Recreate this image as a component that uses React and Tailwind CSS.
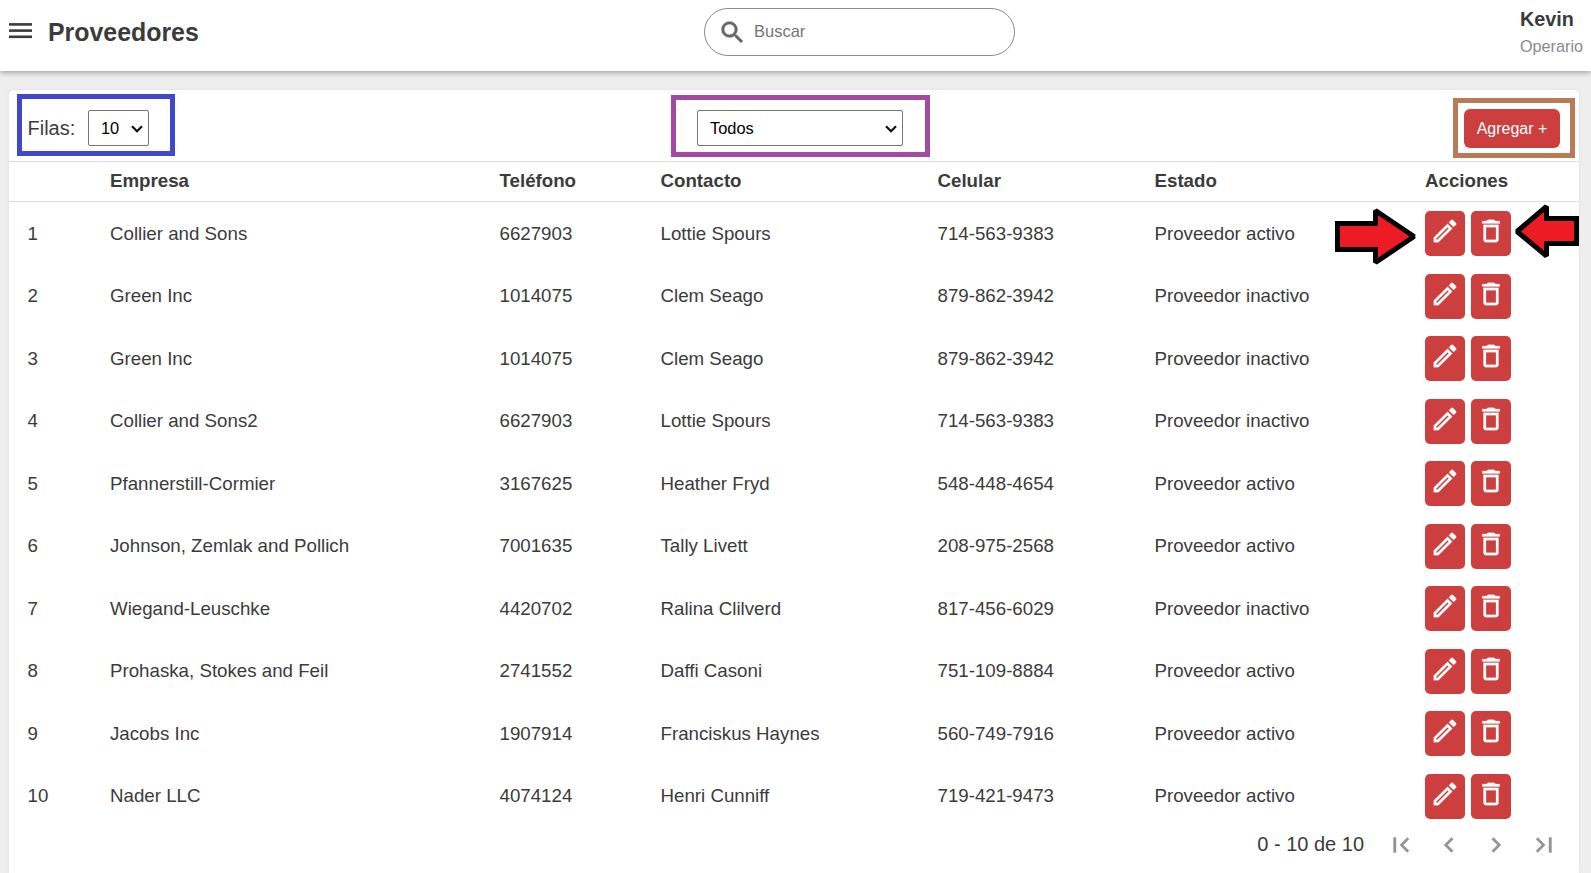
const rows = [
  ["Collier and Sons", "6627903", "Lottie Spours", "714-563-9383", "Proveedor activo"],
  ["Green Inc", "1014075", "Clem Seago", "879-862-3942", "Proveedor inactivo"],
  ["Green Inc", "1014075", "Clem Seago", "879-862-3942", "Proveedor inactivo"],
  ["Collier and Sons2", "6627903", "Lottie Spours", "714-563-9383", "Proveedor inactivo"],
  ["Pfannerstill-Cormier", "3167625", "Heather Fryd", "548-448-4654", "Proveedor activo"],
  ["Johnson, Zemlak and Pollich", "7001635", "Tally Livett", "208-975-2568", "Proveedor activo"],
  ["Wiegand-Leuschke", "4420702", "Ralina Clilverd", "817-456-6029", "Proveedor inactivo"],
  ["Prohaska, Stokes and Feil", "2741552", "Daffi Casoni", "751-109-8884", "Proveedor activo"],
  ["Jacobs Inc", "1907914", "Franciskus Haynes", "560-749-7916", "Proveedor activo"],
  ["Nader LLC", "4074124", "Henri Cunniff", "719-421-9473", "Proveedor activo"],
];

const ICONS = {
  search: "M15.5 14h-.79l-.28-.27A6.471 6.471 0 0 0 16 9.5 6.5 6.5 0 1 0 9.5 16c1.61 0 3.09-.59 4.23-1.57l.27.28v.79l5 4.99L20.49 19l-4.99-5zm-6 0C7.01 14 5 11.99 5 9.5S7.01 5 9.5 5 14 7.01 14 9.5 11.99 14 9.5 14z",
  edit: "M14.06 9.02l.92.92L5.92 19H5v-.92l9.06-9.06M17.66 3c-.25 0-.51.1-.7.29l-1.83 1.83 3.75 3.75 1.83-1.83a.996.996 0 0 0 0-1.41l-2.34-2.34c-.2-.2-.45-.29-.71-.29zm-3.6 3.19L3 17.25V21h3.75L17.81 9.94l-3.75-3.75z",
  trash: "M6 19c0 1.1.9 2 2 2h8c1.1 0 2-.9 2-2V7H6v12zM8 9h8v10H8V9zm7.5-5l-1-1h-5l-1 1H5v2h14V4h-3.5z",
  first: "M18.41 16.59L13.82 12l4.59-4.59L17 6l-6 6 6 6zM6 6h2v12H6z",
  prev: "M15.41 7.41L14 6l-6 6 6 6 1.41-1.41L10.83 12z",
  next: "M10 6L8.59 7.41 13.17 12l-4.58 4.59L10 18l6-6z",
  last: "M5.59 7.41L10.18 12l-4.59 4.59L7 18l6-6-6-6zM16 6h2v12h-2z",
};

const GRID = "grid grid-cols-[82.5px_389.5px_161px_277px_217px_270.5px_1fr] pl-[18.5px]";

function Icon({ name, className = "size-[30px]", weight = 0.3 }) {
  return (
    <svg className={`shrink-0 ${className}`} viewBox="0 0 24 24" fill="currentColor" stroke="currentColor" strokeWidth={weight}>
      <path d={ICONS[name]} />
    </svg>
  );
}

function Select({ label, className }) {
  return (
    <div className={`relative h-9 ${className}`}>
      <select className="h-full w-full appearance-none rounded-[2px] border border-[#767676] bg-white pl-3 text-[16.4px] leading-none text-black">
        <option>{label}</option>
      </select>
      <svg className="pointer-events-none absolute top-[15px] right-[6px] h-2 w-3" viewBox="0 0 12 8" fill="none" stroke="#101010" strokeWidth="2.2">
        <path d="M1 1.2 6 6.2 11 1.2" />
      </svg>
    </div>
  );
}

function ActionButton({ icon }) {
  return (
    <button className="flex h-[45px] w-10 justify-center rounded-[5px] bg-[#cd3f3f] pt-[5px] text-white">
      <Icon name={icon} weight={0.2} />
    </button>
  );
}

export default function App() {
  return (
    <div className="flex h-[873px] w-[1591px] flex-col overflow-hidden bg-[#eeeeee] font-['Liberation_Sans',Arial,sans-serif] text-[18.72px] text-[#3b3b3b]">
      <header className="relative flex h-[71px] shrink-0 items-start justify-between bg-white shadow-[0_2px_5px_rgba(0,0,0,0.3)]">
        <div className="flex h-[65px] w-[704px] items-center">
          <svg className="mb-[3px] ml-[8.5px] h-4 w-[23px] shrink-0" viewBox="0 0 23 16" fill="#3b3b3b">
            <rect y="0.1" width="23" height="2.6" />
            <rect y="6.3" width="23" height="2.6" />
            <rect y="12.5" width="23" height="2.6" />
          </svg>
          <h1 className="ml-[16.5px] text-[24.9px] font-bold">Proveedores</h1>
        </div>
        <div className="mt-2 flex h-12 w-[311px] items-center rounded-full border border-[#8a8a8a] pl-[13px]">
          <Icon name="search" className="size-[29px] text-[#666]" weight={0.5} />
          <input className="ml-[7px] w-48 bg-transparent pb-px text-[16.5px] outline-none placeholder:text-[#757575]" placeholder="Buscar" />
        </div>
        <div className="flex w-[576px] flex-col items-end pt-[8px] pr-2">
          <div className="flex flex-col">
            <span className="text-[19.8px] leading-[22px] font-bold">Kevin</span>
            <span className="mt-[7px] text-[16.2px] leading-[18px] text-[#8a8a8a]">Operario</span>
          </div>
        </div>
      </header>

      <main className="mt-[19px] ml-[9px] flex w-[1570px] flex-1 flex-col rounded-t-[5px] bg-white shadow-[0_0_4px_rgba(0,0,0,0.06)]">
        <div className="flex h-[72px] shrink-0 items-start border-b border-[#dcdcdc]">
          <div className="mt-1 ml-2 flex h-[62px] w-[158px] items-center border-5 border-[#3f48cc] pt-[6px] pl-[5.5px]">
            <span className="w-[60.5px] text-[20px]">Filas:</span>
            <Select label="10" className="w-[61px]" />
          </div>
          <div className="mt-[5px] mr-auto ml-[496px] flex h-[62px] w-[259px] items-center border-5 border-[#a349a4] pt-[4px] pl-[21px]">
            <Select label="Todos" className="w-[206px]" />
          </div>
          <div className="mt-2 mr-1 flex h-[60px] w-[122px] items-center border-5 border-[#b97a57] pl-[6px]">
            <button className="h-[39px] w-24 rounded-[6px] bg-[#cd3f3f] pt-px text-base text-white">Agregar +</button>
          </div>
        </div>

        <div className={`${GRID} h-10 shrink-0 items-center border-b border-[#dcdcdc] pb-[1.5px] font-bold`}>
          <span />
          <span>Empresa</span>
          <span>Teléfono</span>
          <span>Contacto</span>
          <span>Celular</span>
          <span>Estado</span>
          <span>Acciones</span>
        </div>

        <div className="flex flex-col pt-[0.5px]">
          {rows.map((row, i) => (
            <div key={i} className={`${GRID} h-[62.5px] items-center`}>
              <span>{i + 1}</span>
              {row.map((cell, j) => (
                <span key={j}>{cell}</span>
              ))}
              <div className="flex gap-[6px]">
                <ActionButton icon="edit" />
                <ActionButton icon="trash" />
              </div>
            </div>
          ))}
        </div>

        <div className="flex h-[35px] items-center justify-end pr-[20.5px]">
          <span className="mr-[22px] pb-[2px] text-[20px]">0 - 10 de 10</span>
          <div className="flex gap-[17.5px] text-[#949494]">
            <Icon name="first" />
            <Icon name="prev" />
            <Icon name="next" />
            <Icon name="last" />
          </div>
        </div>
      </main>

      <svg className="absolute top-[200px] left-[1330px] h-[70px] w-[249px]" viewBox="1330 200 249 70" fill="#ed1c24" stroke="#000" strokeWidth="5" strokeLinejoin="miter" strokeMiterlimit="1.5">
        <path d="M1337.5 223.5H1375.5V210.5L1414 236.5 1375.5 262.5V249.5H1337.5Z" />
        <path d="M1576.5 218.5H1546.5V206.5L1517 231.5 1546.5 256V243.5H1576.5Z" />
      </svg>
    </div>
  );
}
